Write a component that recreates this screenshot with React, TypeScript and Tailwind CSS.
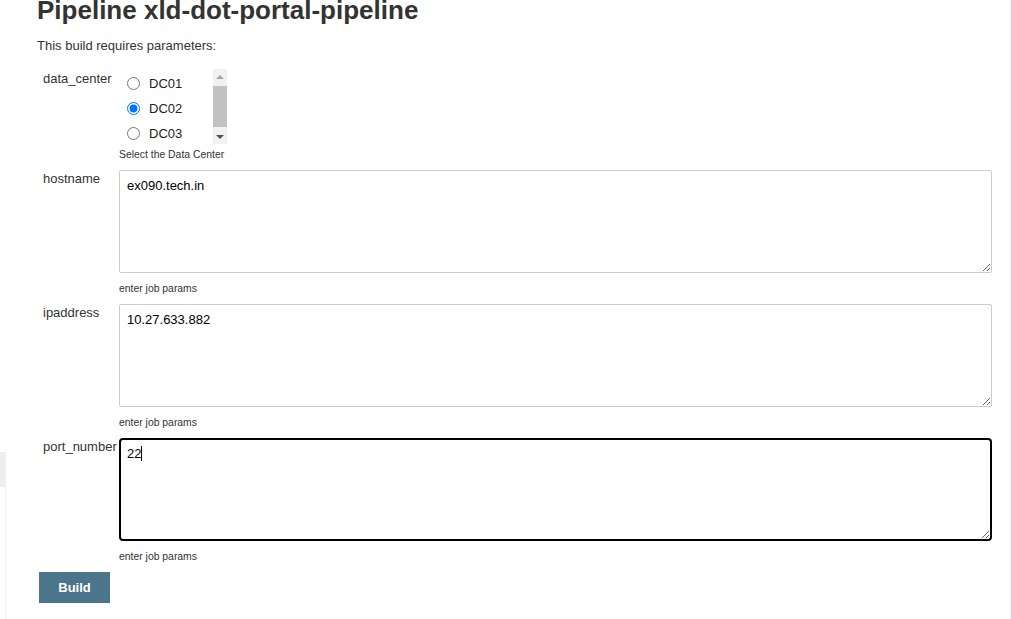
import React from 'react';

const textParams = [
  { name: 'hostname', value: 'ex090.tech.in', focused: false },
  { name: 'ipaddress', value: '10.27.633.882', focused: false },
  { name: 'port_number', value: '22', focused: true },
];

const dataCenters = ['DC01', 'DC02', 'DC03'];

const App: React.FC = () => {
  return (
    <div className="flex min-h-[619px] bg-white font-['Liberation_Sans',Arial,sans-serif] text-[#333333]">
      {/* leftover of the side panel */}
      <div className="w-[6px] flex flex-col">
        <div className="h-[452px]"></div>
        <div className="h-[35px] bg-[#eeeeee]"></div>
        <div className="flex-1 border-r border-[#f3f3f3]"></div>
      </div>

      <main className="flex-1 pl-[31px] pr-[18px]">
        <h1 className="mt-[-5px] text-[26px] leading-[30px] font-bold text-[#333333]">Pipeline xld-dot-portal-pipeline</h1>
        <p className="mt-[13px] text-[13px] leading-[15px]">This build requires parameters:</p>

        <div className="mt-[16px] pl-[6px] grid grid-cols-[76px_1fr]">
          {/* data_center */}
          <div className="pt-[2px] text-[13px] leading-[15px]">data_center</div>
          <div className="pb-[9px]">
            <div className="flex w-[108px] h-[75px]">
              <div className="flex-1 pt-[2px]">
                {dataCenters.map((dc) => (
                  <label key={dc} className="h-[25px] flex items-center pl-[8px] gap-[9px] text-[13px] text-[#222222]">
                    <input type="radio" name="data_center" className="m-0 w-[13px] h-[13px]" defaultChecked={dc === 'DC02'} />
                    {dc}
                  </label>
                ))}
              </div>
              <div className="w-[14px] bg-[#f1f1f1] flex flex-col items-center">
                <div className="h-[15px] flex items-center justify-center">
                  <div className="w-0 h-0 border-l-[4px] border-r-[4px] border-b-[4px] border-l-transparent border-r-transparent border-b-[#a3a3a3]"></div>
                </div>
                <div className="w-full h-[41px] mt-[2px] bg-[#c1c1c1]"></div>
                <div className="flex-1"></div>
                <div className="h-[15px] flex items-center justify-center">
                  <div className="w-0 h-0 border-l-[4px] border-r-[4px] border-t-[4px] border-l-transparent border-r-transparent border-t-[#505050]"></div>
                </div>
              </div>
            </div>
            <div className="mt-[5px] text-[10.4px] leading-[12px]">Select the Data Center</div>
          </div>

          {textParams.map((p) => (
            <React.Fragment key={p.name}>
              <div className="pt-[1px] text-[13px] leading-[15px]">{p.name}</div>
              <div className="pb-[9px]">
                <div className="relative">
                  <textarea
                    defaultValue={p.value}
                    className={
                      p.focused
                        ? 'block w-full h-[103px] border-2 border-black rounded-[4px] pl-[6px] pt-[6px] text-[13px] leading-[15px] text-black outline-none resize-y'
                        : 'block w-full h-[103px] border border-[#cccccc] rounded-[2px] pl-[7px] pt-[7px] text-[13px] leading-[15px] text-black outline-none resize-y'
                    }
                  />
                  {p.focused && <div className="absolute left-[22px] top-[8px] w-px h-[15px] bg-black"></div>}
                </div>
                <div className="mt-[10px] text-[10.4px] leading-[12px]">enter job params</div>
              </div>
            </React.Fragment>
          ))}
        </div>

        <button className="ml-[2px] w-[71px] h-[31px] bg-[#4b758b] text-white text-[13px] font-bold">Build</button>
      </main>

      <div className="w-px bg-[#f0f0f0]"></div>
    </div>
  );
};

export default App;
